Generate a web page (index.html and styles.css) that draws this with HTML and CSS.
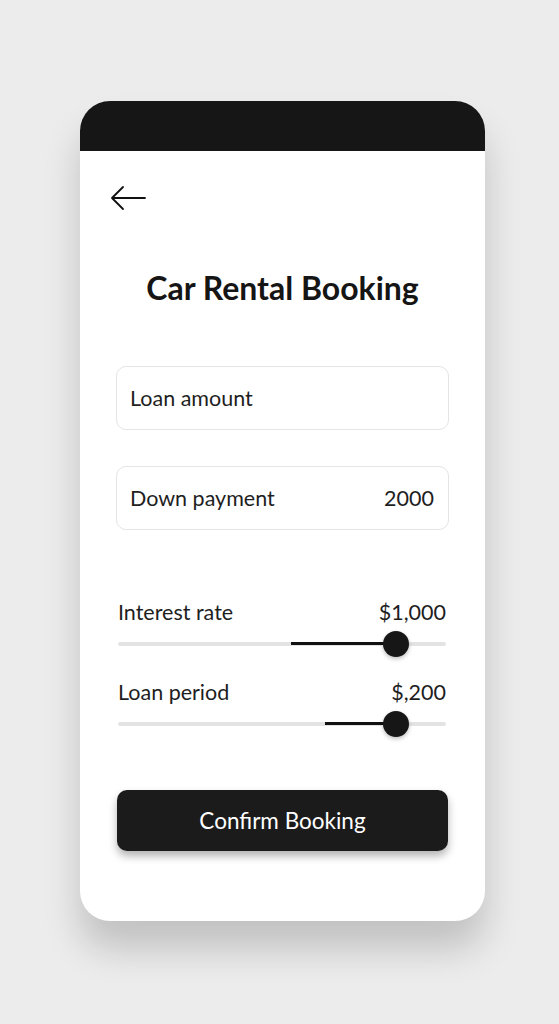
FILE: index.html
```html
<!DOCTYPE html>
<html>
<head>
    <title>Car Rental Booking</title>
    <link rel="stylesheet" href="styles.css">
</head>
<body>
    <div class="phone">
        <div class="top-bar"></div>
        <div class="content">
            <div class="back">
                <svg width="36" height="26" viewBox="0 0 36 26">
                    <path d="M2 13 H35 M13 2 L2 13 L13 24" fill="none" stroke="#111" stroke-width="1.8" stroke-linecap="round" stroke-linejoin="round"/>
                </svg>
            </div>

            <h1>Car Rental Booking</h1>

            <div class="field">
                <span>Loan amount</span>
            </div>
            <div class="field">
                <span>Down payment</span>
                <span>2000</span>
            </div>

            <div class="sliders">
                <div class="slider-row">
                    <span>Interest rate</span>
                    <span>$1,000</span>
                </div>
                <div class="track">
                    <div class="fill" style="left: 52.7%; width: 32.1%;"></div>
                    <div class="thumb" style="left: 84.8%;"></div>
                </div>

                <div class="slider-row second">
                    <span>Loan period</span>
                    <span>$,200</span>
                </div>
                <div class="track">
                    <div class="fill" style="left: 63.1%; width: 21.7%;"></div>
                    <div class="thumb" style="left: 84.8%;"></div>
                </div>
            </div>

            <button class="confirm">Confirm Booking</button>
        </div>
    </div>
</body>
</html>
```

FILE: styles.css
```css
body {
    margin: 0;
    padding: 101px 0 0 80px;
    background-color: #ececec;
    font-family: 'Lato', 'Open Sans', sans-serif;
    color: #1e1e1e;
    height: 1024px;
    box-sizing: border-box;
    overflow: hidden;
}

/* phone frame */
.phone {
    width: 405px;
    height: 820px;
    background-color: #fff;
    border-radius: 30px;
    overflow: hidden;
    box-shadow: 0 28px 36px rgba(0, 0, 0, 0.18);
}

.top-bar {
    height: 50px;
    background-color: #161616;
}

.content {
    padding: 34px 36px 0;
}

.back {
    height: 26px;
    margin-left: -6px;
}

.back svg {
    display: block;
}

h1 {
    margin: 58px 0 59px;
    font-size: 32px;
    line-height: 38px;
    font-weight: bold;
    text-align: center;
    color: #151515;
}

/* input boxes */
.field {
    height: 64px;
    box-sizing: border-box;
    border: 1px solid #e4e4e4;
    border-radius: 10px;
    padding: 0 14px 0 13px;
    display: flex;
    justify-content: space-between;
    align-items: center;
    font-size: 21.5px;
    margin-bottom: 36px;
}

/* sliders */
.sliders {
    margin: 70px 3px 0 2px;
}

.slider-row {
    display: flex;
    justify-content: space-between;
    font-size: 21.5px;
    line-height: 24px;
}

.slider-row.second {
    margin-top: 23px;
}

.track {
    position: relative;
    height: 26px;
    margin-top: 7px;
}

.track::before {
    content: "";
    position: absolute;
    left: 0;
    right: 0;
    top: 11px;
    height: 4px;
    border-radius: 2px;
    background-color: #e3e3e3;
}

.fill {
    position: absolute;
    top: 11px;
    height: 3px;
    background-color: #111;
}

.thumb {
    position: absolute;
    top: 0;
    width: 26px;
    height: 26px;
    margin-left: -13px;
    border-radius: 50%;
    background-color: #161616;
    box-shadow: 0 2px 4px rgba(0, 0, 0, 0.25);
}

/* button */
.confirm {
    display: block;
    width: 331px;
    height: 61px;
    margin: 53px 0 0 1px;
    border: none;
    border-radius: 10px;
    background-color: #1b1b1b;
    color: #fff;
    font-family: inherit;
    font-size: 22.5px;
    box-shadow: 0 5px 9px rgba(0, 0, 0, 0.3);
}
```
